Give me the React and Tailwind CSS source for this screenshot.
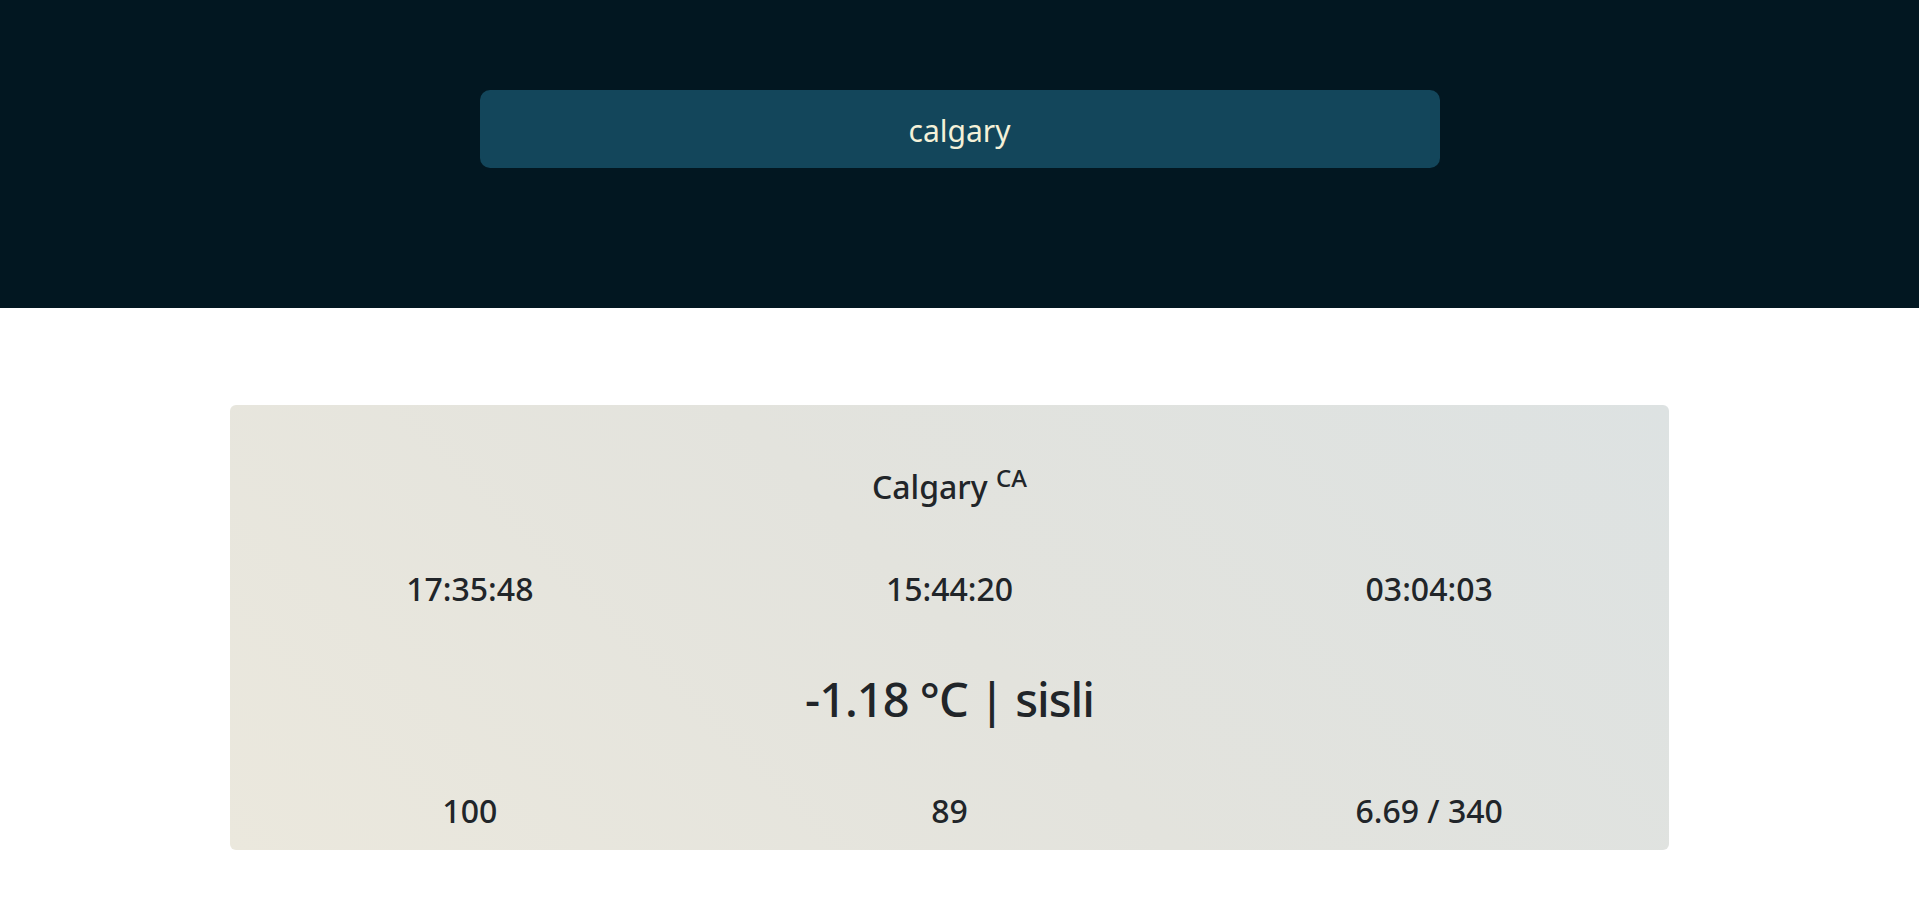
import { useState } from 'react';

const WeatherCard = ({ data }) => {
  return (
    <div className="ml-[230px] mt-[97px] w-[1439px] h-[445px] rounded-md bg-[linear-gradient(45deg,#ebe8dd_0%,#e3e3dd_50%,#dde2e2_100%)] text-[#212529] pt-[63px]">
      {/* City */}
      <h3 className="text-center text-[32px] leading-[38px] font-medium">
        {data.city} <sup className="text-[24px] relative -top-[12px]">{data.country}</sup>
      </h3>

      {/* Times */}
      <div className="grid grid-cols-3 mt-[64px]">
        {data.times.map((t) => (
          <h3 key={t} className="text-center text-[32px] leading-[38px] font-medium">{t}</h3>
        ))}
      </div>

      {/* Temperature */}
      <h1 className="text-center text-[47px] tracking-[-1px] leading-[61px] font-medium mt-[61px]">
        {data.temp} °C | {data.desc}
      </h1>

      {/* Details */}
      <div className="grid grid-cols-3 mt-[62px]">
        {data.details.map((d) => (
          <h3 key={d} className="text-center text-[32px] leading-[38px] font-medium">{d}</h3>
        ))}
      </div>
    </div>
  );
};

const App = () => {
  const [search, setSearch] = useState('calgary');

  const data = {
    city: 'Calgary',
    country: 'CA',
    times: ['17:35:48', '15:44:20', '03:04:03'],
    temp: '-1.18',
    desc: 'sisli',
    details: ['100', '89', '6.69 / 340'],
  };

  return (
    <div className="min-h-[897px] bg-white font-['Noto_Sans',sans-serif]">
      {/* Search Header */}
      <div className="h-[308px] bg-[#021721] pt-[90px]">
        <input
          type="text"
          value={search}
          onChange={(e) => setSearch(e.target.value)}
          className="block mx-auto w-[960px] h-[78px] rounded-[10px] bg-[#13465b] text-[#f4f1d8] text-[30px] text-center outline-none pt-[2px]"
        />
      </div>

      <WeatherCard data={data} />
    </div>
  );
};

export default App;
